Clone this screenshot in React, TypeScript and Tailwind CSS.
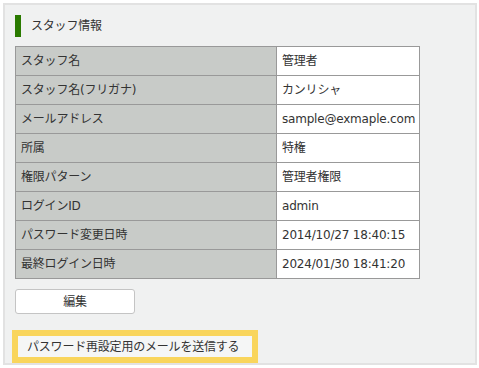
const rows = [
  { label: 'スタッフ名', value: '管理者' },
  { label: 'スタッフ名(フリガナ)', value: 'カンリシャ' },
  { label: 'メールアドレス', value: 'sample@exmaple.com' },
  { label: '所属', value: '特権' },
  { label: '権限パターン', value: '管理者権限' },
  { label: 'ログインID', value: 'admin' },
  { label: 'パスワード変更日時', value: '2014/10/27 18:40:15' },
  { label: '最終ログイン日時', value: '2024/01/30 18:41:20' },
]

export default function App() {
  return (
    <div
      className="w-[479px] h-[368px] bg-white pt-[3px] pl-[3px] text-[#333] text-[12px] tracking-[-0.2px]"
      style={{ fontFamily: '"DejaVu Sans", "Noto Sans CJK JP", sans-serif' }}
    >
      <div className="w-[474px] h-[362px] border-2 border-[#e2e2e2] bg-[#f0f1f1] pt-[10px] pl-[10px]">
        {/* Title */}
        <div className="h-[22px] border-l-[6px] border-[#2a7a00] pl-[10px] flex items-center">
          スタッフ情報
        </div>

        {/* Info table */}
        <table className="mt-[9px] w-[405px] table-fixed border-collapse">
          <colgroup>
            <col className="w-[261px]" />
            <col />
          </colgroup>
          <tbody>
            {rows.map((row) => (
              <tr key={row.label} className="h-[29px]">
                <td className="border border-[#999] bg-[#c8cbc8] px-[5px] leading-none">{row.label}</td>
                <td className="border border-[#999] bg-white px-[5px] leading-none whitespace-nowrap">{row.value}</td>
              </tr>
            ))}
          </tbody>
        </table>

        <button className="mt-[10px] w-[120px] h-[25px] bg-white border border-[#c4c4c4] rounded-[3px] flex items-center justify-center">
          編集
        </button>

        <div className="mt-[16px] -ml-[3px] w-[246px] border-[6px] border-[#f9d55c]">
          <button className="w-full h-[21px] bg-[#f5f6f6] flex items-center pl-[9px] whitespace-nowrap">
            パスワード再設定用のメールを送信する
          </button>
        </div>
      </div>
    </div>
  )
}
